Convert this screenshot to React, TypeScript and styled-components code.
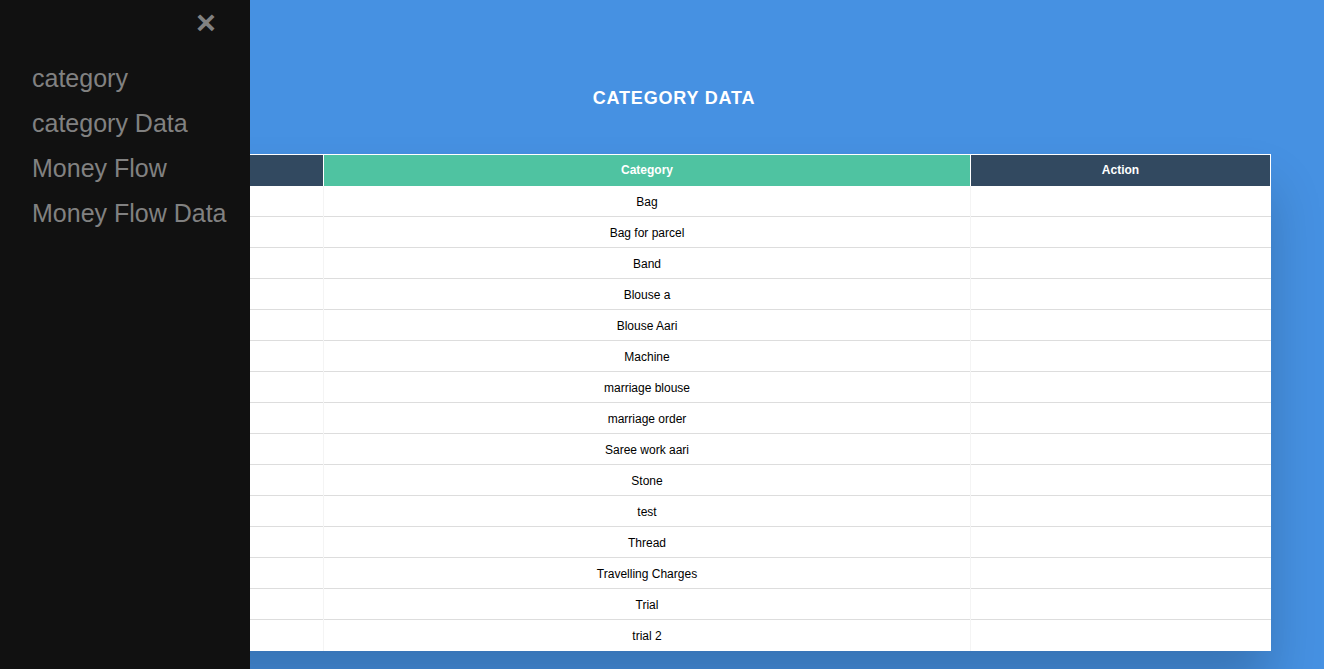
import React from "react";
import styled, { createGlobalStyle } from "styled-components";

const GlobalStyle = createGlobalStyle`
  html, body {
    margin: 0;
    padding: 0;
    background: #4691e2;
    font-family: "Liberation Sans", Arial, sans-serif;
  }
  * { box-sizing: border-box; }
`;

const Page = styled.div`
  min-height: 669px;
  background: #4691e2;
  display: flex;
  flex-direction: column;
  align-items: stretch;
  padding: 0 54px 20px;
`;

const Title = styled.h2`
  margin: 88px 0 45px;
  padding-left: 24px;
  font-size: 18px;
  line-height: 21px;
  font-weight: 700;
  text-transform: uppercase;
  letter-spacing: 0.8px;
  color: #ffffff;
  text-align: center;
`;

const TableWrap = styled.div`
  box-shadow: 0px 35px 50px rgba(0, 0, 0, 0.2);
  background: #ffffff;
`;

const Table = styled.table`
  width: 100%;
  border-collapse: collapse;
  table-layout: fixed;
  background: #ffffff;
  font-size: 12px;
  white-space: nowrap;
`;

const HeadCell = styled.th<{ $alt?: boolean }>`
  height: 31px;
  padding: 0 8px;
  font-size: 12px;
  font-weight: 700;
  color: #ffffff;
  text-align: center;
  background: ${(p) => (p.$alt ? "#4fc3a1" : "#324960")};
  border: 1px solid #ffffff;
  border-bottom: none;
`;

const Row = styled.tr`
  background: #ffffff;
  border-bottom: 1px solid #dddddd;
  &:last-child {
    border-bottom: none;
  }
`;

const Cell = styled.td`
  height: 31px;
  padding: 2px 8px 0;
  text-align: center;
  color: #000000;
  font-size: 12px;
  border-right: 1px solid #f4f4f4;
  &:last-child {
    border-right: none;
  }
`;

const Sidebar = styled.nav`
  position: fixed;
  top: 0;
  left: 0;
  width: 250px;
  height: 100%;
  background: #111111;
  padding-top: 56px;
  display: flex;
  flex-direction: column;
  z-index: 10;
`;

const CloseBtn = styled.a`
  position: absolute;
  top: -1px;
  left: 196px;
  font-size: 34px;
  font-weight: 700;
  line-height: 46px;
  color: #818181;
  text-decoration: none;
  cursor: pointer;
`;

const NavLink = styled.a`
  display: block;
  padding: 8px 8px 8px 32px;
  font-size: 25px;
  line-height: 29px;
  color: #818181;
  text-decoration: none;
  white-space: nowrap;
`;

const categories = [
  "Bag",
  "Bag for parcel",
  "Band",
  "Blouse a",
  "Blouse Aari",
  "Machine",
  "marriage blouse",
  "marriage order",
  "Saree work aari",
  "Stone",
  "test",
  "Thread",
  "Travelling Charges",
  "Trial",
  "trial 2",
];

export default function App() {
  return (
    <>
      <GlobalStyle />
      <Sidebar>
        <CloseBtn>×</CloseBtn>
        <NavLink>category</NavLink>
        <NavLink>category Data</NavLink>
        <NavLink>Money Flow</NavLink>
        <NavLink>Money Flow Data</NavLink>
      </Sidebar>
      <Page>
        <Title>Category Data</Title>
        <TableWrap>
          <Table>
            <colgroup>
              <col style={{ width: 269 }} />
              <col style={{ width: 647 }} />
              <col style={{ width: 300 }} />
            </colgroup>
            <thead>
              <tr>
                <HeadCell>S.No</HeadCell>
                <HeadCell $alt>Category</HeadCell>
                <HeadCell>Action</HeadCell>
              </tr>
            </thead>
            <tbody>
              {categories.map((c) => (
                <Row key={c}>
                  <Cell></Cell>
                  <Cell>{c}</Cell>
                  <Cell></Cell>
                </Row>
              ))}
            </tbody>
          </Table>
        </TableWrap>
      </Page>
    </>
  );
}
